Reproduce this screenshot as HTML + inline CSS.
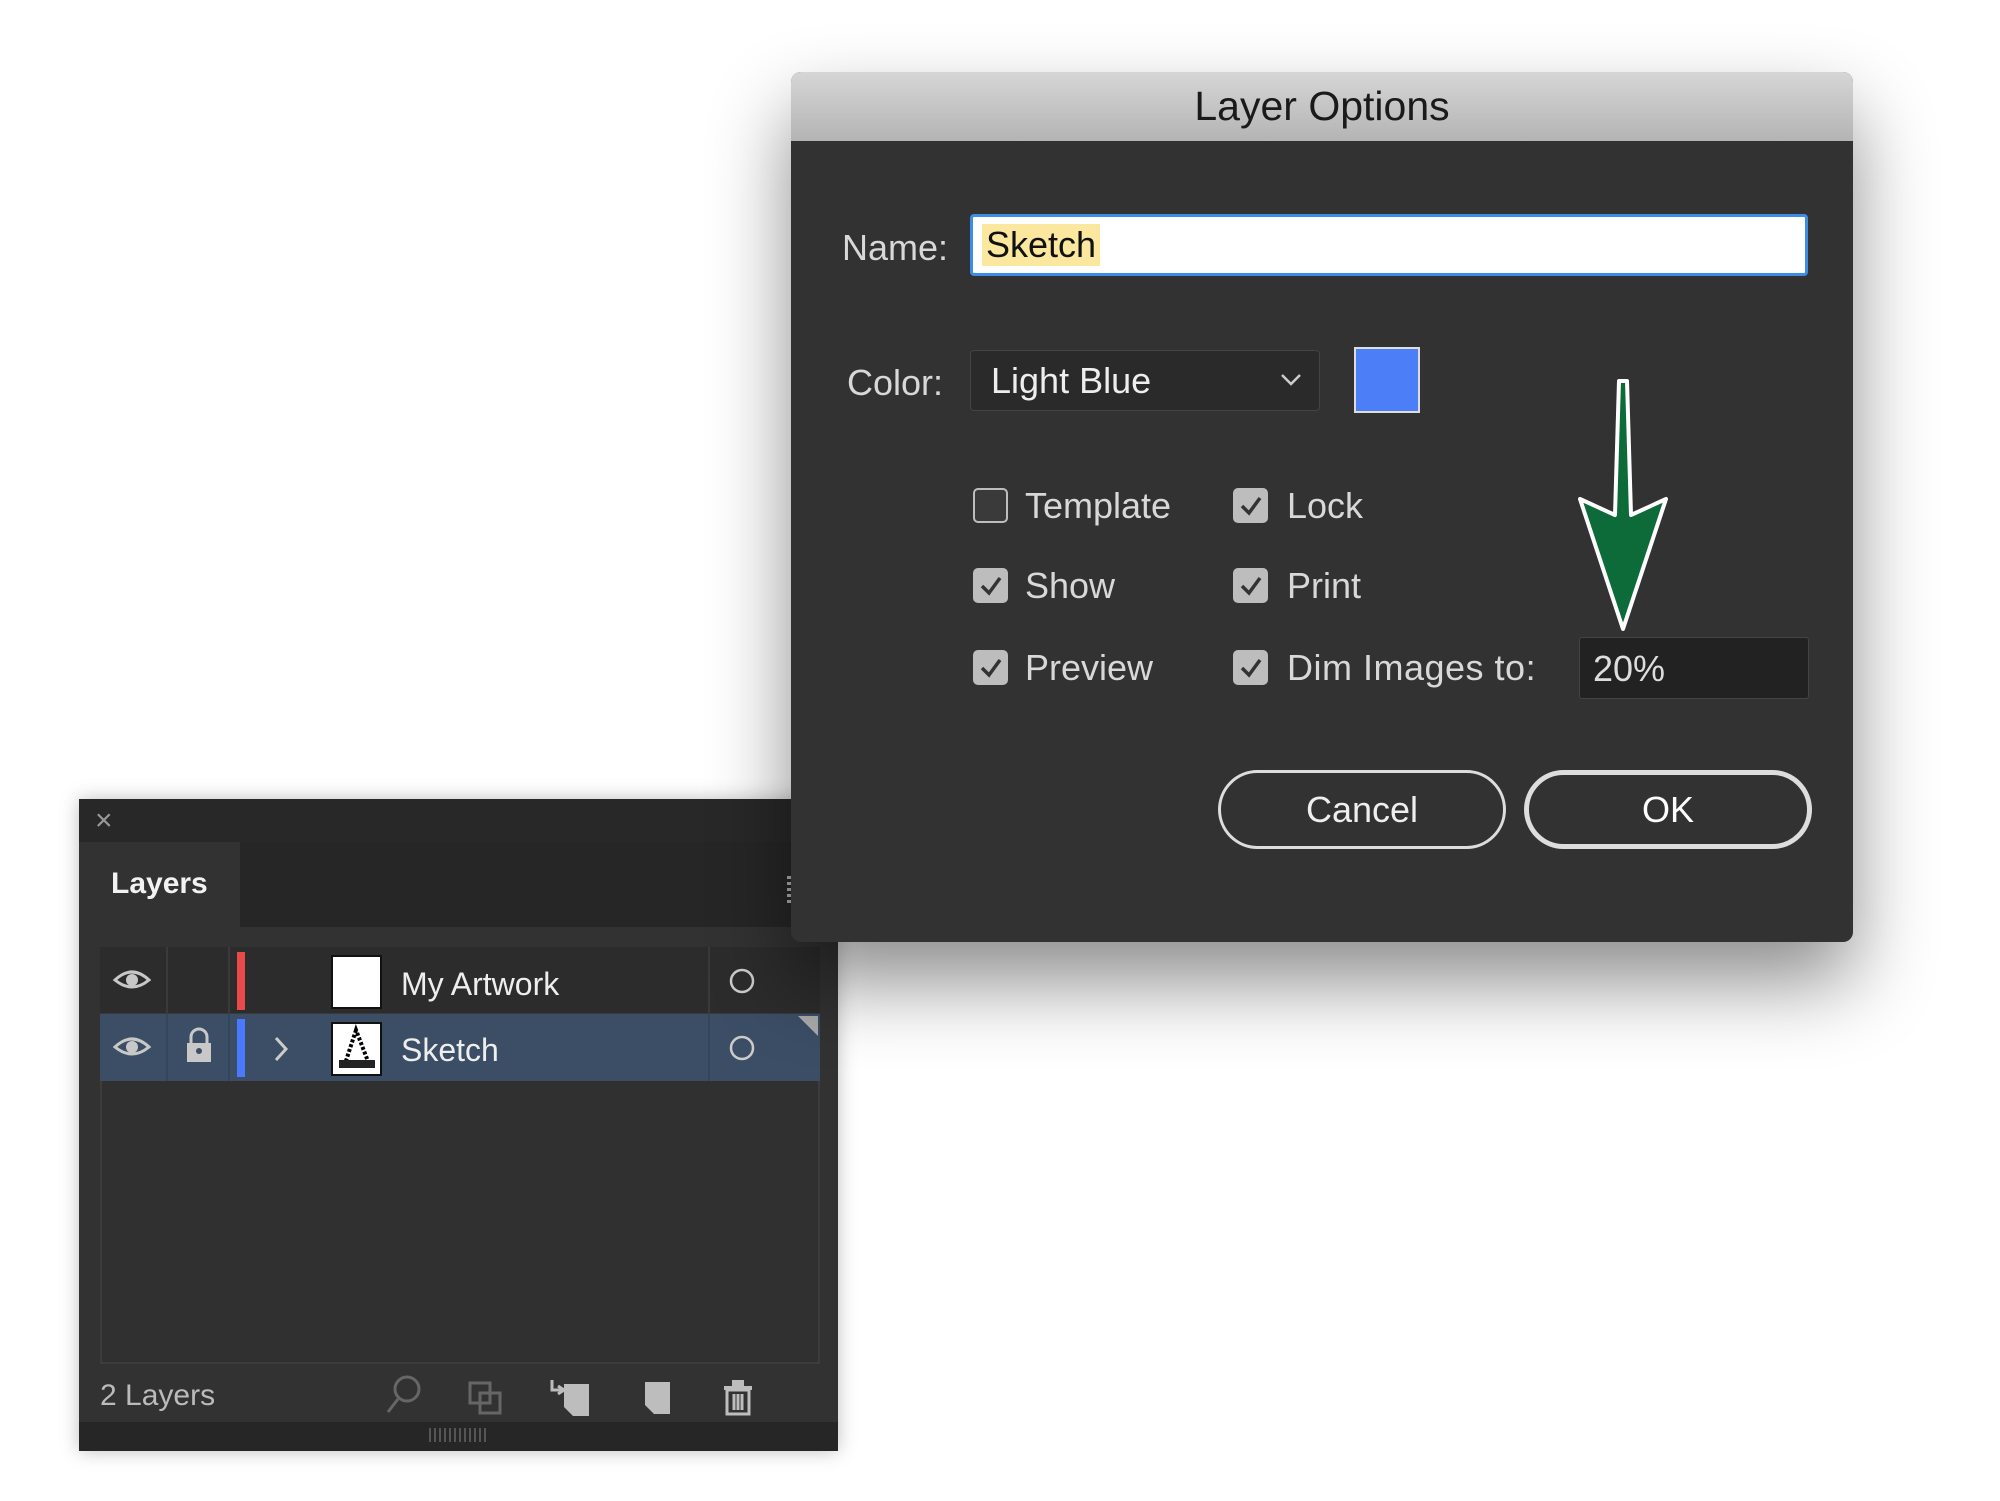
<!DOCTYPE html>
<html><head><meta charset="utf-8"><style>
*{margin:0;padding:0;box-sizing:border-box}
body{width:2000px;height:1501px;background:#fff;position:relative;overflow:hidden;font-family:"Liberation Sans",sans-serif}
.a{position:absolute}
.t{color:#d8d8d8;font-size:36px;line-height:1}
.cb{position:absolute;width:35px;height:35px;border:2px solid #bdbdbd;border-radius:5px;background:#3a3a3a}
.cb.on{background:#bdbdbd}
.cb.on svg{position:absolute;left:4px;top:4px}
</style></head><body>

<!-- Layers panel -->
<div class="a" style="left:79px;top:799px;width:759px;height:652px;background:#323232;box-shadow:0 0 18px rgba(0,0,0,.25)">
  <div class="a" style="left:0;top:0;width:759px;height:43px;background:#282828"></div>
  <div class="a" style="left:16px;top:5px;color:#9a9a9a;font-size:30px">×</div>
  <div class="a" style="left:161px;top:43px;width:598px;height:85px;background:#262626"></div>
  <div class="a" style="left:32px;top:68px;color:#f2f2f2;font-size:30px;font-weight:bold">Layers</div>
  <div class="a" style="left:21px;top:148px;width:720px;height:417px;border:2px solid #3c3c3c;background:#303030"></div>
  <!-- row1 -->
  <div class="a" style="left:21px;top:148px;width:720px;height:67px;background:#2c2c2c;border-bottom:1px solid #3a3a3a"></div>
  <div class="a" style="left:87px;top:148px;width:2px;height:134px;background:#3a3a3a"></div>
  <div class="a" style="left:149px;top:148px;width:2px;height:134px;background:#3a3a3a"></div>
  <div class="a" style="left:629px;top:148px;width:2px;height:134px;background:#3a3a3a"></div>
  <div class="a" style="left:158px;top:153px;width:8px;height:58px;background:#e84a4a"></div>
  <div class="a" style="left:252px;top:156px;width:51px;height:54px;background:#fff;border:2px solid #111"></div>
  <div class="a" style="left:322px;top:167px;color:#eee;font-size:32px">My Artwork</div>
  <!-- row2 -->
  <div class="a" style="left:21px;top:215px;width:720px;height:67px;background:#3b4e66"></div>
  <div class="a" style="left:87px;top:215px;width:2px;height:67px;background:#34465c"></div>
  <div class="a" style="left:149px;top:215px;width:2px;height:67px;background:#34465c"></div>
  <div class="a" style="left:629px;top:215px;width:2px;height:67px;background:#34465c"></div>
  <div class="a" style="left:158px;top:220px;width:8px;height:58px;background:#4a78ff"></div>
  <div class="a" style="left:252px;top:223px;width:51px;height:54px;background:#fff;border:2px solid #111"><svg width="47" height="50"><path d="M23 6 L12 40 L36 40 Z" fill="none" stroke="#000" stroke-width="4" stroke-dasharray="3 2"/><rect x="6" y="36" width="36" height="8" fill="#222"/></svg></div>
  <div class="a" style="left:322px;top:233px;color:#eee;font-size:32px">Sketch</div>
  <div class="a" style="left:719px;top:217px;width:0;height:0;border-top:20px solid #aaa;border-left:20px solid transparent"></div>
  <!-- eyes -->
  <svg class="a" style="left:33px;top:163px" width="40" height="100"><g fill="none" stroke="#c8c8c8" stroke-width="3"><path d="M3 18 Q20 2 37 18 Q20 32 3 18Z"/><path d="M3 85 Q20 69 37 85 Q20 99 3 85Z"/></g><circle cx="20" cy="18" r="6" fill="#c8c8c8"/><circle cx="20" cy="85" r="6" fill="#c8c8c8"/></svg>
  <svg class="a" style="left:105px;top:228px" width="30" height="38"><path d="M7 16 V10 a8 8 0 0 1 16 0 V16" fill="none" stroke="#c8c8c8" stroke-width="3"/><rect x="3" y="16" width="24" height="19" fill="#c8c8c8"/><circle cx="15" cy="24" r="3" fill="#3b4e66"/></svg>
  <svg class="a" style="left:192px;top:236px" width="20" height="30"><path d="M5 3 L15 14 L5 25" fill="none" stroke="#ccc" stroke-width="3"/></svg>
  <svg class="a" style="left:648px;top:167px" width="30" height="100"><circle cx="15" cy="15" r="11" fill="none" stroke="#ccc" stroke-width="2.5"/><circle cx="15" cy="82" r="11" fill="none" stroke="#ccc" stroke-width="2.5"/></svg>
  <!-- footer -->
  <div class="a" style="left:21px;top:580px;color:#bbb;font-size:30px">2 Layers</div>
  <svg class="a" style="left:305px;top:575px" width="420" height="45"><g fill="none" stroke="#666" stroke-width="3"><circle cx="23" cy="15" r="12"/><path d="M14 25 L4 38"/><rect x="86" y="9" width="20" height="20"/><rect x="96" y="19" width="20" height="20"/></g>
  <g fill="#bdbdbd"><path d="M180 10 h25 v32 h-16 l-9-9z"/><path d="M261 8 h25 v32 h-16 l-9-9z"/><rect x="340" y="12" width="28" height="4"/><rect x="348" y="6" width="12" height="6"/></g>
  <g fill="none" stroke="#bdbdbd" stroke-width="3"><path d="M168 6 v10 h12 M174 12 l6 4 -6 4"/><rect x="343" y="16" width="22" height="24"/><path d="M350 20v16M354 20v16M358 20v16"/></g></svg>
  <div class="a" style="left:0;top:623px;width:759px;height:29px;background:#262626"></div>
  <div class="a" style="left:350px;top:629px;width:60px;height:14px;background:repeating-linear-gradient(90deg,#555 0 2px,transparent 2px 5px)"></div>
</div>

<!-- Dialog -->
<div class="a" style="left:791px;top:72px;width:1062px;height:870px;background:#323232;border-radius:10px;box-shadow:0 40px 80px rgba(0,0,0,.45);overflow:hidden">
  <div class="a" style="left:0;top:0;width:1062px;height:69px;background:linear-gradient(#d6d6d6,#b4b4b4);color:#1a1a1a;font-size:41px;text-align:center;line-height:69px">Layer Options</div>
  <div class="a t" style="left:51px;top:158px">Name:</div>
  <div class="a" style="left:179px;top:142px;width:838px;height:62px;background:#fff;border:3px solid #3b8ee8;border-radius:4px"></div>
  <div class="a" style="left:191px;top:152px;height:42px;padding:0 4px;background:#fbe89e;color:#111;font-size:36px;line-height:42px">Sketch</div>
  <div class="a t" style="left:56px;top:293px">Color:</div>
  <div class="a" style="left:179px;top:278px;width:350px;height:61px;background:#2a2a2a;border:1px solid #444;border-radius:4px;color:#eee;font-size:36px;line-height:59px;padding-left:20px">Light Blue</div>
  <svg class="a" style="left:488px;top:300px" width="24" height="16"><path d="M3 3 L12 12 L21 3" fill="none" stroke="#ccc" stroke-width="2.5"/></svg>
  <div class="a" style="left:563px;top:275px;width:66px;height:66px;background:#4b7ef7;border:2px solid #ddd"></div>

  <div class="cb" style="left:182px;top:416px"></div>
  <div class="a t" style="left:234px;top:416px">Template</div>
  <div class="cb on" style="left:442px;top:416px"><svg width="24" height="24"><path d="M3 12 L10 19 L21 4" fill="none" stroke="#333" stroke-width="3.5"/></svg></div>
  <div class="a t" style="left:496px;top:416px">Lock</div>
  <div class="cb on" style="left:182px;top:496px"><svg width="24" height="24"><path d="M3 12 L10 19 L21 4" fill="none" stroke="#333" stroke-width="3.5"/></svg></div>
  <div class="a t" style="left:234px;top:496px">Show</div>
  <div class="cb on" style="left:442px;top:496px"><svg width="24" height="24"><path d="M3 12 L10 19 L21 4" fill="none" stroke="#333" stroke-width="3.5"/></svg></div>
  <div class="a t" style="left:496px;top:496px">Print</div>
  <div class="cb on" style="left:182px;top:578px"><svg width="24" height="24"><path d="M3 12 L10 19 L21 4" fill="none" stroke="#333" stroke-width="3.5"/></svg></div>
  <div class="a t" style="left:234px;top:578px">Preview</div>
  <div class="cb on" style="left:442px;top:578px"><svg width="24" height="24"><path d="M3 12 L10 19 L21 4" fill="none" stroke="#333" stroke-width="3.5"/></svg></div>
  <div class="a t" style="left:496px;top:578px;letter-spacing:0.5px">Dim Images to:</div>
  <div class="a" style="left:788px;top:565px;width:230px;height:62px;background:#222;border:1px solid #444;border-radius:3px;color:#ddd;font-size:36px;line-height:62px;padding-left:13px">20%</div>

  <div class="a" style="left:427px;top:698px;width:288px;height:79px;border:3px solid #ddd;border-radius:40px;color:#eee;font-size:36px;text-align:center;line-height:73px">Cancel</div>
  <div class="a" style="left:733px;top:698px;width:288px;height:79px;border:5px solid #ddd;border-radius:40px;color:#fff;font-size:36px;text-align:center;line-height:69px">OK</div>

  <svg class="a" style="left:782px;top:305px" width="100" height="260"><path d="M46 4 L54 4 L58 138 L93 122 L50 252 L7 122 L42 138 Z" fill="#0c6b39" stroke="#fff" stroke-width="4" stroke-linejoin="round"/></svg>
</div>
<div class="a" style="left:787px;top:876px;width:4px;height:30px;background:repeating-linear-gradient(#888 0 3px,transparent 3px 6px)"></div>
</body></html>
